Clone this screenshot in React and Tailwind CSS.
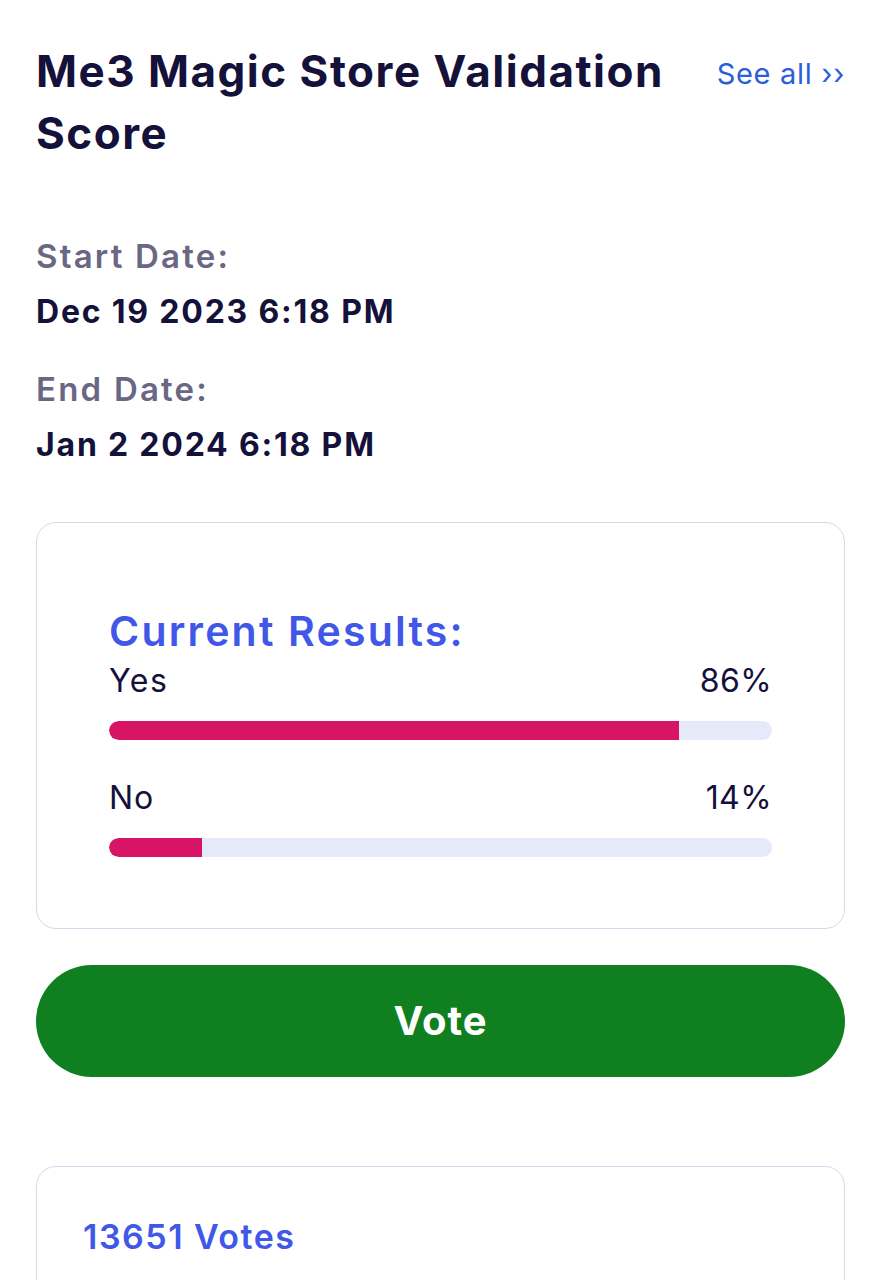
import React from "react";

const F = { fontFamily: "Inter, 'Noto Sans', sans-serif" };

function Bar({ pct }) {
  return (
    <div className="h-[19px] w-full rounded-full bg-[#e6e9fa] overflow-hidden">
      <div className="h-full bg-[#d81465] rounded-l-full" style={{ width: pct + "%" }} />
    </div>
  );
}

export default function App() {
  return (
    <div className="bg-white h-[1280px] overflow-hidden w-[881px] px-[36px] text-[#14113b]" style={F}>
      <div className="flex justify-between items-start pt-[40px]">
        <h1 className="text-[44px] leading-[62px] font-bold tracking-[1.5px] w-[660px]">
          Me3 Magic Store Validation Score
        </h1>
        <a className="text-[#2b5fd9] text-[29px] leading-[40px] mt-[14px] whitespace-nowrap tracking-[0.7px]">See all ››</a>
      </div>

      <div className="mt-[70px]">
        <div className="text-[#6a6785] text-[33px] font-semibold leading-[44px] tracking-[2.2px]">Start Date:</div>
        <div className="text-[32px] font-bold leading-[44px] mt-[12px] tracking-[1.8px]">Dec 19 2023 6:18 PM</div>
        <div className="text-[#6a6785] text-[33px] font-semibold leading-[44px] mt-[33px] tracking-[2.2px]">End Date:</div>
        <div className="text-[32px] font-bold leading-[44px] mt-[12px] tracking-[1.8px]">Jan 2 2024 6:18 PM</div>
      </div>

      <div className="mt-[55px] border border-[#d6d8ee] rounded-[20px] h-[407px] px-[72px] pt-[80px]">
        <div className="text-[#4157e8] text-[41px] font-semibold leading-[56px] tracking-[2.2px]">Current Results:</div>
        <div className="flex justify-between text-[32px] leading-[40px] mt-[2px]">
          <span className="tracking-[1.5px]">Yes</span><span className="tracking-[0.4px]">86%</span>
        </div>
        <div className="mt-[20px]"><Bar pct={86} /></div>
        <div className="flex justify-between text-[32px] leading-[40px] mt-[38px]">
          <span className="tracking-[1px]">No</span><span className="tracking-[0.4px]">14%</span>
        </div>
        <div className="mt-[20px]"><Bar pct={14} /></div>
      </div>

      <button className="mt-[36px] w-full h-[112px] rounded-full bg-[#0f7f1f] text-white text-[40px] font-bold tracking-[1px]">
        Vote
      </button>

      <div className="mt-[89px] border border-[#d6d8ee] rounded-[20px] h-[200px] px-[46px] pt-[48px]">
        <div className="text-[#4157e8] text-[34px] font-semibold leading-[44px] tracking-[1.5px]">13651 Votes</div>
      </div>
    </div>
  );
}
